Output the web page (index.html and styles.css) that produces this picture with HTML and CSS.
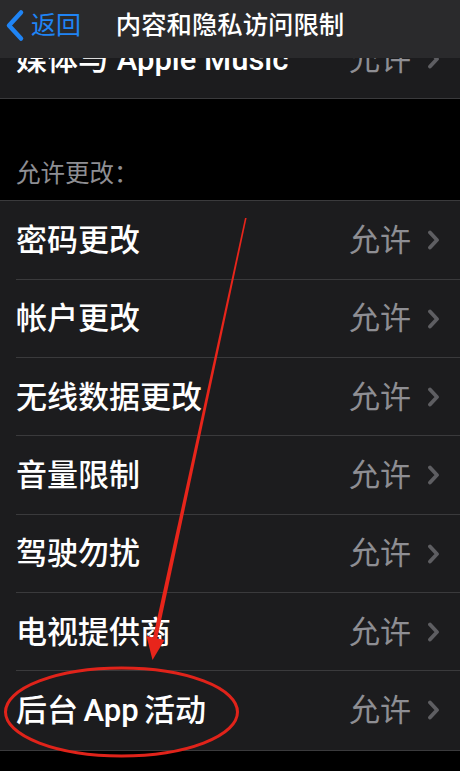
FILE: index.html
```html
<!DOCTYPE html>
<html lang="zh-CN">
<head>
<meta charset="utf-8">
<link rel="stylesheet" href="styles.css">
<title>内容和隐私访问限制</title>
</head>
<body>
<div class="screen">
  <div class="content">
    <div class="group top-group">
      <div class="row last">
        <span class="label">媒体与 Apple Music</span>
        <span class="value">允许</span>
        <svg class="chev" viewBox="0 0 12 20"><path d="M2.5 2.5 L9.5 10 L2.5 17.5"/></svg>
      </div>
    </div>

    <div class="section-header">允许更改：</div>

    <div class="group">
      <div class="row">
        <span class="label">密码更改</span>
        <span class="value">允许</span>
        <svg class="chev" viewBox="0 0 12 20"><path d="M2.5 2.5 L9.5 10 L2.5 17.5"/></svg>
      </div>
      <div class="row">
        <span class="label">帐户更改</span>
        <span class="value">允许</span>
        <svg class="chev" viewBox="0 0 12 20"><path d="M2.5 2.5 L9.5 10 L2.5 17.5"/></svg>
      </div>
      <div class="row">
        <span class="label">无线数据更改</span>
        <span class="value">允许</span>
        <svg class="chev" viewBox="0 0 12 20"><path d="M2.5 2.5 L9.5 10 L2.5 17.5"/></svg>
      </div>
      <div class="row">
        <span class="label">音量限制</span>
        <span class="value">允许</span>
        <svg class="chev" viewBox="0 0 12 20"><path d="M2.5 2.5 L9.5 10 L2.5 17.5"/></svg>
      </div>
      <div class="row">
        <span class="label">驾驶勿扰</span>
        <span class="value">允许</span>
        <svg class="chev" viewBox="0 0 12 20"><path d="M2.5 2.5 L9.5 10 L2.5 17.5"/></svg>
      </div>
      <div class="row">
        <span class="label">电视提供商</span>
        <span class="value">允许</span>
        <svg class="chev" viewBox="0 0 12 20"><path d="M2.5 2.5 L9.5 10 L2.5 17.5"/></svg>
      </div>
      <div class="row last">
        <span class="label">后台<span class="sp"> </span>App<span class="sp"> </span>活动</span>
        <span class="value">允许</span>
        <svg class="chev" viewBox="0 0 12 20"><path d="M2.5 2.5 L9.5 10 L2.5 17.5"/></svg>
      </div>
    </div>
  </div>

  <div class="navbar">
    <div class="back">
      <svg class="back-chev" viewBox="0 0 22 32"><path d="M17 3 L5 16 L17 29"/></svg>
      <span>返回</span>
    </div>
    <div class="title">内容和隐私访问限制</div>
    <div></div>
  </div>

  <svg class="annotation" viewBox="0 0 460 771" width="460" height="771">
    <polygon points="245,218 246.6,218 156.5,642 152.3,641" fill="#e8251b"/>
    <polygon points="146.5,636 164.5,640 152.5,660" fill="#e8251b"/>
    <ellipse cx="121.5" cy="712" rx="116" ry="44" fill="none" stroke="#e0231a" stroke-width="3"/>
  </svg>
</div>
</body>
</html>
```

FILE: styles.css
```css
* { box-sizing: border-box; }

html, body {
  margin: 0;
  padding: 0;
  background: #000;
}

body {
  font-family: "Roboto", "Noto Sans CJK SC", sans-serif;
  color: #fff;
}

.screen {
  position: relative;
  width: 460px;
  height: 771px;
  overflow: hidden;
  background: #000;
}

.content {
  padding-top: 20px;
}

.group {
  background: #1c1c1e;
  border-top: 1px solid #3a3a3c;
  border-bottom: 1px solid #3a3a3c;
}

.top-group {
  border-top: none;
}

.row {
  position: relative;
  display: flex;
  align-items: center;
  height: 78.33px;
  padding: 0 20px 0 16px;
}

.row::after {
  content: "";
  position: absolute;
  left: 16px;
  right: 0;
  bottom: 0;
  height: 1px;
  background: #3a3a3c;
}

.row.last::after {
  display: none;
}

.label {
  flex: 1;
  font-size: 31px;
  font-weight: 500;
  line-height: 1;
  color: #fff;
  white-space: nowrap;
}

.sp {
  font-size: 22px;
}

.value {
  font-size: 31px;
  line-height: 1;
  color: #8e8e93;
  margin-right: 16px;
}

.chev {
  width: 13px;
  height: 20px;
  fill: none;
  stroke: #5e5e62;
  stroke-width: 3.8;
  stroke-linecap: round;
  stroke-linejoin: round;
}

.section-header {
  height: 101px;
  display: flex;
  align-items: flex-end;
  padding: 0 0 14px 16px;
  font-size: 24.5px;
  line-height: 1;
  color: #8e8e93;
}

.navbar {
  position: absolute;
  top: 0;
  left: 0;
  right: 0;
  height: 58px;
  background: #2a2a2c;
  display: grid;
  grid-template-columns: 1fr auto 1fr;
  align-items: center;
  padding-bottom: 7px;
}

.back {
  display: flex;
  align-items: center;
  padding-left: 4px;
  color: #1f84f5;
  font-size: 25px;
  line-height: 1;
}

.back-chev {
  width: 22px;
  height: 33px;
  fill: none;
  stroke: #1f84f5;
  stroke-width: 4.5;
  stroke-linecap: round;
  stroke-linejoin: round;
  margin-right: 5px;
}

.title {
  font-size: 25.4px;
  font-weight: 500;
  line-height: 1;
  color: #fff;
  white-space: nowrap;
}

.annotation {
  position: absolute;
  top: 0;
  left: 0;
  pointer-events: none;
}
```
